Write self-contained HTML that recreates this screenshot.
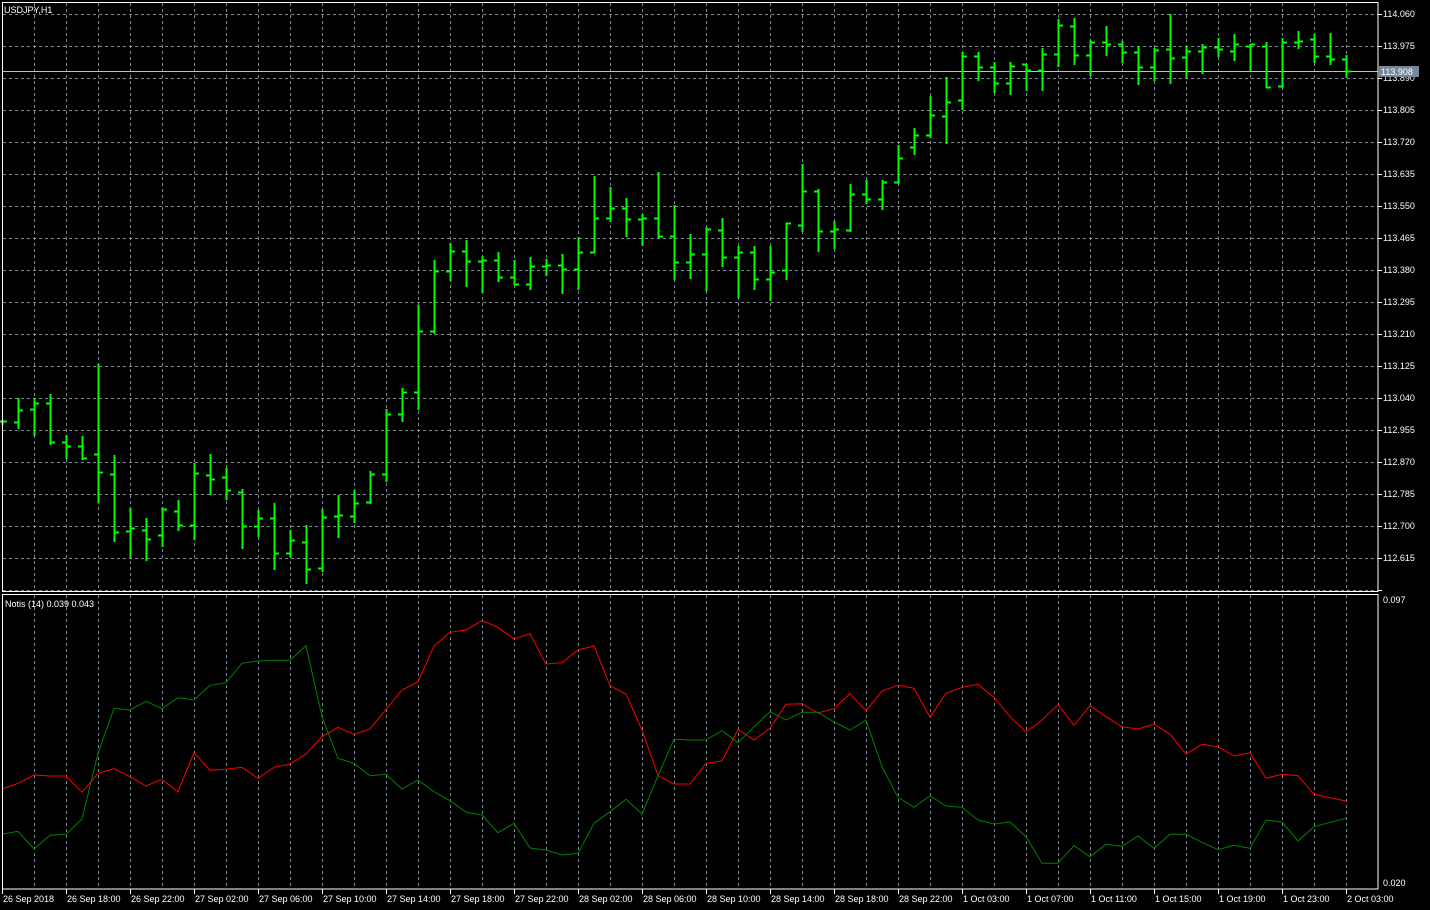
<!DOCTYPE html>
<html><head><meta charset="utf-8"><style>
html,body{margin:0;padding:0;background:#000;width:1430px;height:910px;overflow:hidden}
svg{display:block}
text{font-family:"Liberation Sans",sans-serif;font-size:9px;fill:#fff}
</style></head><body>
<svg id="s" width="1430" height="910" xmlns="http://www.w3.org/2000/svg">
<g id="grid"></g>
<line x1="2" y1="71.5" x2="1378" y2="71.5" stroke="#c0c0c0" stroke-width="1"/>
<g id="bars"></g>
<polyline id="red" fill="none" stroke="#ff0000" stroke-width="1"/>
<polyline id="grn" fill="none" stroke="#008000" stroke-width="1"/>
<rect x="2.5" y="2.5" width="1375.5" height="589" fill="none" stroke="#fff" stroke-width="1"/>
<rect x="2.5" y="594.5" width="1375.5" height="294.5" fill="none" stroke="#fff" stroke-width="1"/>
<g id="ticks" stroke="#fff" stroke-width="1"></g>
<text x="4" y="13">USDJPY,H1</text>
<text x="5" y="607">Notis (14) 0.039 0.043</text>
<g id="pl">
<text x="1383" y="17">114.060</text>
<text x="1383" y="49">113.975</text>
<text x="1383" y="81">113.890</text>
<text x="1383" y="113">113.805</text>
<text x="1383" y="145">113.720</text>
<text x="1383" y="177">113.635</text>
<text x="1383" y="209">113.550</text>
<text x="1383" y="241">113.465</text>
<text x="1383" y="273">113.380</text>
<text x="1383" y="305">113.295</text>
<text x="1383" y="337">113.210</text>
<text x="1383" y="369">113.125</text>
<text x="1383" y="401">113.040</text>
<text x="1383" y="433">112.955</text>
<text x="1383" y="465">112.870</text>
<text x="1383" y="497">112.785</text>
<text x="1383" y="529">112.700</text>
<text x="1383" y="561">112.615</text>
<text x="1383" y="603">0.097</text>
<text x="1383" y="886">0.020</text>
</g>
<rect x="1379" y="66" width="40" height="11" fill="#778899"/>
<text x="1381" y="75">113.908</text>
<g id="tl">
<text x="3" y="902">26 Sep 2018</text>
<text x="67" y="902">26 Sep 18:00</text>
<text x="131" y="902">26 Sep 22:00</text>
<text x="195" y="902">27 Sep 02:00</text>
<text x="259" y="902">27 Sep 06:00</text>
<text x="323" y="902">27 Sep 10:00</text>
<text x="387" y="902">27 Sep 14:00</text>
<text x="451" y="902">27 Sep 18:00</text>
<text x="515" y="902">27 Sep 22:00</text>
<text x="579" y="902">28 Sep 02:00</text>
<text x="643" y="902">28 Sep 06:00</text>
<text x="707" y="902">28 Sep 10:00</text>
<text x="771" y="902">28 Sep 14:00</text>
<text x="835" y="902">28 Sep 18:00</text>
<text x="899" y="902">28 Sep 22:00</text>
<text x="963" y="902">1 Oct 03:00</text>
<text x="1027" y="902">1 Oct 07:00</text>
<text x="1091" y="902">1 Oct 11:00</text>
<text x="1155" y="902">1 Oct 15:00</text>
<text x="1219" y="902">1 Oct 19:00</text>
<text x="1283" y="902">1 Oct 23:00</text>
<text x="1347" y="902">2 Oct 03:00</text>
</g>
</svg>
<script>
var NS="http://www.w3.org/2000/svg";
function el(p,t,a){var e=document.createElementNS(NS,t);for(var k in a)e.setAttribute(k,a[k]);p.appendChild(e);return e;}
var g=document.getElementById('grid');
for(var x=34;x<1378;x+=32){
 el(g,'line',{x1:x+.5,y1:3,x2:x+.5,y2:591,stroke:'#778899','stroke-dasharray':'3,3'});
 el(g,'line',{x1:x+.5,y1:595,x2:x+.5,y2:889,stroke:'#778899','stroke-dasharray':'3,3'});
}
for(var y=14;y<591;y+=32){el(g,'line',{x1:3,y1:y+.5,x2:1378,y2:y+.5,stroke:'#778899','stroke-dasharray':'3,3'});}
var tk=document.getElementById('ticks');
for(var y=14;y<591;y+=32)el(tk,'line',{x1:1378,y1:y+.5,x2:1382,y2:y+.5});
for(var x=2;x<1378;x+=64)el(tk,'line',{x1:x+.5,y1:889,x2:x+.5,y2:894});
var B=[[420,424,421,421],[398,428,422,410],[398,435,409,403],[394,444,403,442],[435,458,442,446],[436,459,446,458],[364,502,454,472],[455,541,474,532],[508,557,531,528],[518,560,530,539],[507,546,535,509],[500,530,511,525],[463,539,525,473],[454,494,475,479],[468,499,477,490],[489,548,492,526],[510,536,526,518],[503,569,518,553],[530,557,553,540],[525,583,542,569],[509,571,568,517],[495,537,516,515],[490,522,516,503],[471,503,502,474],[409,481,474,414],[388,421,414,392],[305,409,392,331],[260,333,331,271],[243,280,271,251],[240,286,251,261],[256,292,261,260],[252,281,260,277],[260,284,277,284],[257,289,284,266],[259,275,266,265],[254,293,265,269],[237,289,269,252],[176,252,252,218],[187,221,218,208],[198,236,208,219],[214,245,219,218],[172,237,218,236],[205,279,236,262],[234,278,262,254],[227,290,254,229],[218,266,230,257],[246,297,257,252],[246,289,252,279],[246,300,279,272],[223,279,270,223],[164,231,225,191],[189,251,191,231],[221,248,231,229],[184,231,230,194],[180,203,194,199],[180,209,199,182],[145,183,182,158],[128,154,147,135],[96,137,135,115],[77,143,116,102],[52,109,100,56],[52,80,56,67],[62,92,67,83],[62,94,83,66],[64,90,64,70],[48,90,70,54],[19,66,54,25],[18,64,26,55],[40,75,55,42],[26,55,42,44],[41,62,44,52],[46,84,52,67],[48,80,67,50],[14,83,49,58],[46,77,57,51],[44,73,51,47],[38,56,47,49],[34,60,51,44],[44,70,46,44],[42,87,46,87],[38,87,86,42],[31,48,42,41],[34,62,39,56],[33,64,56,59],[55,77,59,71]];
var bg=document.getElementById('bars');var d='';
B.forEach(function(b,k){var x=2+16*k;
 d+='M'+(x+.5)+' '+b[0]+'V'+(b[1]+1)+'M'+(x-4)+' '+(b[2]+.5)+'H'+(x+1)+'M'+x+' '+(b[3]+.5)+'H'+(x+5);});
el(bg,'path',{d:d,stroke:'#00ff00','stroke-width':2,fill:'none'});
var R=[789,783.3,775,776,776,792.3,773.3,768.7,776.7,786,779.3,791.7,752.7,770.3,769.3,767.3,778.3,767.3,764,754,736.7,727.3,734.3,729,709.3,690,681.7,646,632.3,630,620.7,627.3,639,633.7,664,662.7,650,646,685.7,694,730,775.7,784,784,763.3,761,729.3,740,728.3,704.3,703.7,713,708.7,693.7,710.7,691,685.3,688.3,717.3,693.3,687.3,684.3,697.3,716.7,732,720,704.7,725.3,705.7,716.7,726.7,729,724,734.3,754,744.3,746.7,756,752.7,778.3,774.3,775.7,794.3,797.7,801];
var G=[834.3,831.3,849,835.3,834.3,819,753.3,708.3,710,701.3,708.7,697.7,700,685.3,682.7,663.3,661,660.3,660.3,645.7,716.7,758.3,763.3,775.7,774.3,789,780,791.7,800.7,812,815,832.7,823.3,848,850,855,853.3,823.3,811.7,799.3,814,775.7,739.3,740,740,730.7,742.7,726.7,711.7,720,712.3,712.3,722,730,720,766.7,797.3,807.3,795.7,806,807.3,820,824,822,836.7,863.3,863.3,845.7,856.7,844.3,846.3,836,848.3,834.3,834.3,842.3,849.7,845.3,848.3,820,822,841,826.7,822.3,818.3];
function pts(a){return a.map(function(v,k){return (2+16*k)+','+v;}).join(' ');}
document.getElementById('red').setAttribute('points',pts(R));
document.getElementById('grn').setAttribute('points',pts(G));
</script>
</body></html>
